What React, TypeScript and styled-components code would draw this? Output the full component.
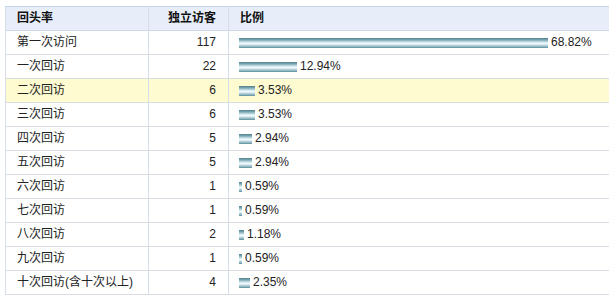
import styled, { createGlobalStyle } from 'styled-components'

const GlobalStyle = createGlobalStyle`
    html, body {
        margin: 0;
        padding: 0;
        background: #fff;
    }
    body {
        font-family: "Liberation Sans", "Noto Sans CJK SC", sans-serif;
        font-size: 12px;
        color: #222;
    }
`

const rows = [
    { label: '第一次访问', count: 117, pct: 68.82 },
    { label: '一次回访', count: 22, pct: 12.94 },
    { label: '二次回访', count: 6, pct: 3.53, hot: true },
    { label: '三次回访', count: 6, pct: 3.53 },
    { label: '四次回访', count: 5, pct: 2.94 },
    { label: '五次回访', count: 5, pct: 2.94 },
    { label: '六次回访', count: 1, pct: 0.59 },
    { label: '七次回访', count: 1, pct: 0.59 },
    { label: '八次回访', count: 2, pct: 1.18 },
    { label: '九次回访', count: 1, pct: 0.59 },
    { label: '十次回访(含十次以上)', count: 4, pct: 2.35 },
]

export default function App() {
    return (
        <>
            <GlobalStyle />
            <WrapSld>
                <TableSld>
                    <colgroup>
                        <col style={{ width: 143 }} />
                        <col style={{ width: 80 }} />
                        <col />
                    </colgroup>
                    <thead>
                        <tr>
                            <HeadSld>回头率</HeadSld>
                            <HeadSld $right>独立访客</HeadSld>
                            <HeadSld $last>比例</HeadSld>
                        </tr>
                    </thead>
                    <tbody>
                        {rows.map((r) => (
                            <RowSld key={r.label} $hot={r.hot}>
                                <CellSld>{r.label}</CellSld>
                                <CellSld $right>{r.count}</CellSld>
                                <CellSld $last>
                                    <RatioSld>
                                        <BarSld style={{ width: Math.max(2, Math.round(r.pct * 4.49)) }} />
                                        <span>{r.pct.toFixed(2)}%</span>
                                    </RatioSld>
                                </CellSld>
                            </RowSld>
                        ))}
                    </tbody>
                </TableSld>
            </WrapSld>
        </>
    )
}

const WrapSld = styled.div`
    padding: 6px 0 0 5px;
`

const TableSld = styled.table`
    width: 604px;
    border-collapse: collapse;
    table-layout: fixed;
    border-left: 1px solid #d6dee9;
    border-top: 1px solid #c9d6ea;
`

const HeadSld = styled.th<{ $right?: boolean; $last?: boolean }>`
    height: 23px;
    padding: 0 12px 0 11px;
    box-sizing: border-box;
    background: #e7eef9;
    border-bottom: 1px solid #cfd9e6;
    border-right: ${(p) => (p.$last ? 'none' : '1px solid #d6dee9')};
    text-align: ${(p) => (p.$right ? 'right' : 'left')};
    font-weight: bold;
    color: #111;
    font-size: 12px;
    line-height: 23px;
`

const RowSld = styled.tr<{ $hot?: boolean }>`
    background: ${(p) => (p.$hot ? '#fffbd1' : '#fff')};
`

const CellSld = styled.td<{ $right?: boolean; $last?: boolean }>`
    height: 24px;
    padding: 0 12px 0 11px;
    box-sizing: border-box;
    border-bottom: 1px solid #d8dde4;
    border-right: ${(p) => (p.$last ? 'none' : '1px solid #d6dee9')};
    text-align: ${(p) => (p.$right ? 'right' : 'left')};
    line-height: 23px;
    white-space: nowrap;
`

const RatioSld = styled.div`
    display: flex;
    align-items: center;
    gap: 3px;
    margin-left: -1px;
`

const BarSld = styled.div`
    height: 10px;
    background: linear-gradient(
        to bottom,
        #4f7f8c 0%,
        #7fa9b6 20%,
        #c6e0e8 40%,
        #f4fbfc 55%,
        #b4d3dd 75%,
        #5e8e9b 100%
    );
`
